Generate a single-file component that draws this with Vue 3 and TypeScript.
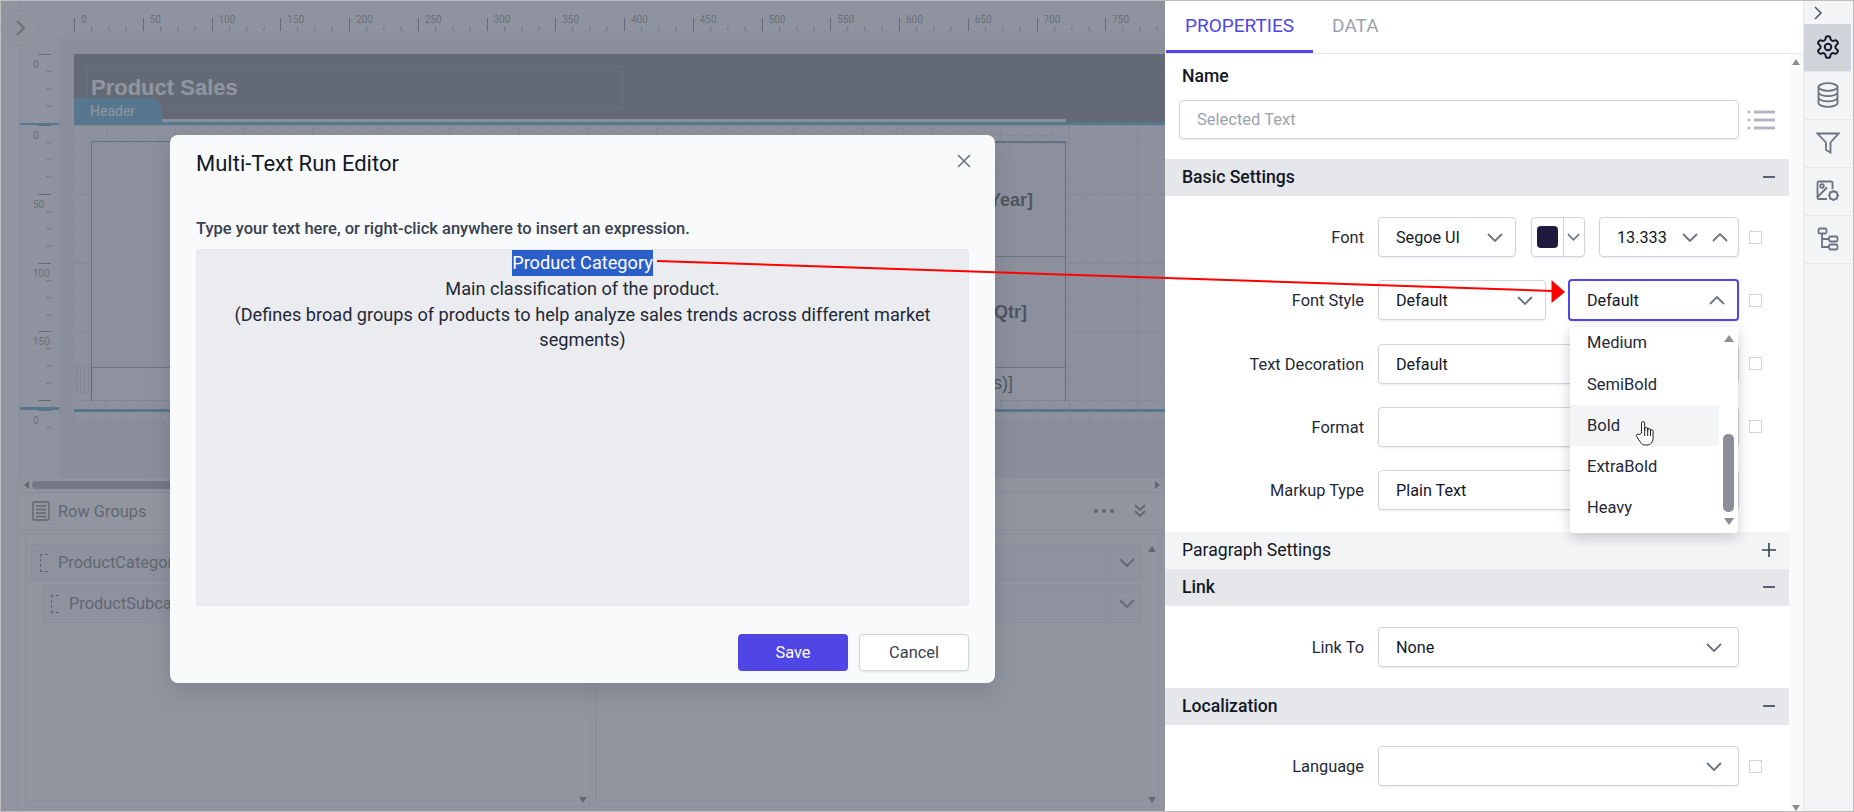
<template>
  <div class="app">
    <!-- report designer, dimmed by the dialog overlay -->
    <div class="designer">
      <div class="rail">
        <button class="collapse-btn">
          <svg width="11" height="18" viewBox="0 0 11 18"><path d="M2 2l7 7-7 7" /></svg>
        </button>
      </div>
      <div class="designer-main">
        <div class="design-area">
          <div class="top-ruler-row">
            <div class="h-ruler">
              <div v-for="n in hRuler" :key="n" class="h-cell">{{ n }}</div>
            </div>
          </div>
          <div class="design-row">
            <div class="v-ruler-col">
              <div class="v-ruler v-ruler-head">
                <div class="v-cell">0</div>
              </div>
              <div class="v-sep"></div>
              <div class="v-ruler v-ruler-body">
                <div v-for="n in vRuler" :key="n" class="v-cell">{{ n }}</div>
                <div class="v-cell"></div>
              </div>
              <div class="v-sep v-sep-thick"></div>
              <div class="v-ruler v-ruler-foot">
                <div class="v-cell">0</div>
              </div>
            </div>
            <div class="surface">
              <div class="report-header">
                <div class="title-box">Product Sales</div>
                <div class="header-tab">Header</div>
              </div>
              <div class="report-body">
                <div class="faint-box"></div>
                <div class="tablix">
                  <div class="tablix-row row-year"><b>[Year]</b></div>
                  <div class="tablix-row row-qtr"><b>[Qtr]</b></div>
                  <div class="tablix-row row-sum">[Sum(Sales)]</div>
                </div>
                <div class="row-handle"><i></i><i></i></div>
              </div>
              <div class="body-line"></div>
              <div class="report-footer"></div>
            </div>
          </div>
        </div>
        <div class="h-scroll">
          <span class="arrow-left"></span>
          <div class="h-thumb"></div>
          <span class="arrow-right"></span>
        </div>
        <div class="groups">
          <div class="groups-head">
            <svg width="18" height="20" viewBox="0 0 18 20" class="groups-icon">
              <rect x="1" y="1" width="16" height="18" rx="1" />
              <path d="M4 5h10M4 8.500h10M4 12h10M4 15.500h10" />
            </svg>
            <span>Row Groups</span>
            <div class="groups-tools">
              <span class="dots"><i></i><i></i><i></i></span>
              <svg width="12" height="14" viewBox="0 0 12 14"><path d="M1 1l5 5 5-5M1 7l5 5 5-5" /></svg>
            </div>
          </div>
          <div class="groups-body">
            <div class="pane">
              <div class="group-item">
                <span class="bracket"></span>ProductCategory
              </div>
              <div class="group-item nested">
                <span class="bracket"></span>ProductSubcategory
              </div>
              <span class="pane-arrow-down"></span>
            </div>
            <div class="pane pane-right">
              <div class="detail-item"><div class="detail-chevron"><svg width="16" height="9" viewBox="0 0 16 9"><path d="M1 1l7 7 7-7" /></svg></div></div>
              <div class="detail-item nested-detail"><div class="detail-chevron"><svg width="16" height="9" viewBox="0 0 16 9"><path d="M1 1l7 7 7-7" /></svg></div></div>
              <span class="pane-arrow-up"></span>
              <span class="pane-arrow-down pane-arrow-far"></span>
            </div>
          </div>
        </div>
      </div>
    </div>

    <!-- properties panel -->
    <aside class="props">
      <div class="tabs">
        <div class="tab active">PROPERTIES</div>
        <div class="tab">DATA</div>
      </div>
      <div class="props-scroll">
        <div class="props-content">
          <div class="name-label">Name</div>
          <div class="name-row">
            <div class="name-input">Selected Text</div>
            <svg width="28" height="22" viewBox="0 0 28 22" class="list-icon">
              <circle cx="2" cy="3" r="1.500" />
              <circle cx="2" cy="11" r="1.500" />
              <circle cx="2" cy="19" r="1.500" />
              <rect x="7" y="1.500" width="21" height="3" />
              <rect x="7" y="9.500" width="21" height="3" />
              <rect x="7" y="17.500" width="21" height="3" />
            </svg>
          </div>

          <div class="bar">Basic Settings<svg width="14" height="14" viewBox="0 0 14 14"><path d="M1 7h12" /></svg></div>
          <div class="rows rows-basic">
            <div class="row">
              <label>Font</label>
              <div class="control font-controls">
                <div class="sel sel-font">Segoe UI<svg class="chev" width="16" height="9" viewBox="0 0 16 9"><path d="M1 1l7 7 7-7" /></svg></div>
                <div class="color-pick">
                  <span class="swatch-wrap"><span class="swatch"></span></span>
                  <span class="color-drop"><svg class="chev" width="13" height="8" viewBox="0 0 14 8"><path d="M1 1l6 6 6-6" /></svg></span>
                </div>
                <div class="sel sel-size">
                  13.333
                  <span class="spin">
                    <svg class="chev" width="16" height="9" viewBox="0 0 16 9"><path d="M1 1l7 7 7-7" /></svg>
                    <svg class="chev" width="16" height="9" viewBox="0 0 16 9"><path d="M1 8l7-7 7 7" /></svg>
                  </span>
                </div>
              </div>
              <span class="check"></span>
            </div>
            <div class="row">
              <label>Font Style</label>
              <div class="control style-controls">
                <div class="sel sel-style">Default<svg class="chev" width="16" height="9" viewBox="0 0 16 9"><path d="M1 1l7 7 7-7" /></svg></div>
                <div class="weight-wrap">
                  <div class="sel sel-focus">Default<svg class="chev" width="16" height="9" viewBox="0 0 16 9"><path d="M1 8l7-7 7 7" /></svg></div>
                  <div class="dropdown">
                    <ul class="drop-list">
                      <li v-for="w in weights" :key="w" :class="{ hover: w === 'Bold' }">{{ w }}</li>
                    </ul>
                    <div class="drop-scroll">
                      <span class="tri-up"></span>
                      <span class="drop-thumb"></span>
                      <span class="tri-down"></span>
                    </div>
                    <svg class="hand" width="20" height="26" viewBox="0 0 20 26">
                      <path d="M6.500 13V3.200a1.600 1.600 0 0 1 3.200 0V11l0-2a1.500 1.500 0 0 1 3 0v2.500l0-1.500a1.400 1.400 0 0 1 2.800 0v2l0-.8a1.300 1.300 0 0 1 2.600 0V18c0 4-2.500 7-6.300 7H10.500c-2.500 0-3.800-1-5-2.700L1.700 16.500a1.500 1.500 0 0 1 2.400-1.800z" />
                      <path d="M9.700 11v5M12.700 11v5M15.500 12v4" />
                    </svg>
                  </div>
                </div>
              </div>
              <span class="check"></span>
            </div>
            <div class="row">
              <label>Text Decoration</label>
              <div class="control"><div class="sel">Default</div></div>
              <span class="check"></span>
            </div>
            <div class="row">
              <label>Format</label>
              <div class="control"><div class="sel"></div></div>
              <span class="check"></span>
            </div>
            <div class="row">
              <label>Markup Type</label>
              <div class="control"><div class="sel">Plain Text</div></div>
            </div>
          </div>

          <div class="bar bar-closed">Paragraph Settings<svg width="14" height="14" viewBox="0 0 14 14"><path d="M0 7h14M7 0v14" /></svg></div>
          <div class="bar">Link<svg width="14" height="14" viewBox="0 0 14 14"><path d="M1 7h12" /></svg></div>
          <div class="rows rows-single">
            <div class="row">
              <label>Link To</label>
              <div class="control"><div class="sel">None<svg class="chev" width="16" height="9" viewBox="0 0 16 9"><path d="M1 1l7 7 7-7" /></svg></div></div>
            </div>
          </div>
          <div class="bar">Localization<svg width="14" height="14" viewBox="0 0 14 14"><path d="M1 7h12" /></svg></div>
          <div class="rows rows-single">
            <div class="row">
              <label>Language</label>
              <div class="control"><div class="sel sel-empty"><svg class="chev" width="16" height="9" viewBox="0 0 16 9"><path d="M1 1l7 7 7-7" /></svg></div></div>
              <span class="check"></span>
            </div>
          </div>
        </div>
        <div class="props-strip">
          <span class="tri-up"></span>
          <span class="tri-down"></span>
        </div>
      </div>
    </aside>

    <!-- right icon toolbar -->
    <nav class="toolbar">
      <div class="toolbar-top">
        <svg width="10" height="14" viewBox="0 0 10 14"><path d="M2 1l6 6-6 6" /></svg>
      </div>
      <div class="tool active">
        <svg width="26" height="26" viewBox="0 0 24 24" class="tool-dark">
          <path d="M12.220 2h-.44a2 2 0 0 0-2 2v.18a2 2 0 0 1-1 1.730l-.43.25a2 2 0 0 1-2 0l-.15-.08a2 2 0 0 0-2.730.73l-.22.38a2 2 0 0 0 .73 2.730l.15.1a2 2 0 0 1 1 1.720v.51a2 2 0 0 1-1 1.740l-.15.09a2 2 0 0 0-.73 2.730l.22.38a2 2 0 0 0 2.730.73l.15-.08a2 2 0 0 1 2 0l.43.25a2 2 0 0 1 1 1.730V20a2 2 0 0 0 2 2h.44a2 2 0 0 0 2-2v-.18a2 2 0 0 1 1-1.730l.43-.25a2 2 0 0 1 2 0l.15.08a2 2 0 0 0 2.730-.73l.22-.39a2 2 0 0 0-.73-2.730l-.15-.08a2 2 0 0 1-1-1.740v-.5a2 2 0 0 1 1-1.740l.15-.09a2 2 0 0 0 .73-2.730l-.22-.38a2 2 0 0 0-2.730-.73l-.15.08a2 2 0 0 1-2 0l-.43-.25a2 2 0 0 1-1-1.730V4a2 2 0 0 0-2-2z" />
          <circle cx="12" cy="12" r="3" />
        </svg>
      </div>
      <div class="tool">
        <svg width="22" height="26" viewBox="0 0 22 26">
          <ellipse cx="11" cy="5" rx="9.500" ry="3.800" />
          <path d="M1.500 5v16c0 2.100 4.300 3.800 9.500 3.800s9.500-1.700 9.500-3.800V5M1.500 10.300c0 2.100 4.300 3.800 9.500 3.800s9.500-1.700 9.500-3.800M1.500 15.600c0 2.100 4.300 3.800 9.500 3.800s9.500-1.700 9.500-3.800" />
        </svg>
      </div>
      <div class="tool">
        <svg width="24" height="22" viewBox="0 0 24 22">
          <path d="M1.500 1.500h21l-8 9v10l-4.500-2.500v-7.500z" />
        </svg>
      </div>
      <div class="tool">
        <svg width="24" height="22" viewBox="0 0 24 22">
          <path d="M11 19H2.800a1.300 1.300 0 0 1-1.300-1.300V2.800a1.300 1.300 0 0 1 1.300-1.300h12.400a1.300 1.300 0 0 1 1.300 1.300V9" />
          <circle cx="6" cy="6" r="1.800" />
          <path d="M1.500 17l9.500-9.500" />
          <circle cx="17.500" cy="15.500" r="4" class="tool-fill" />
          <path d="M17.500 10v2M17.500 19v2M12 15.500h2M21 15.500h2M13.600 11.600l1.400 1.400M20 18l1.400 1.400M13.600 19.400l1.400-1.400M20 13l1.400-1.400" />
        </svg>
      </div>
      <div class="tool">
        <svg width="22" height="24" viewBox="0 0 22 24">
          <rect x="1.500" y="1.500" width="8" height="5" rx="1.500" />
          <rect x="12" y="9.500" width="8.500" height="5" rx="1.500" />
          <rect x="12" y="17.500" width="8.500" height="5" rx="1.500" />
          <path d="M5 6.500V20h7M5 12h7" />
        </svg>
      </div>
    </nav>

    <div class="overlay"></div>

    <!-- dialog -->
    <div class="dialog">
      <div class="dialog-head">
        <h2>Multi-Text Run Editor</h2>
        <svg width="14" height="14" viewBox="0 0 14 14" class="dialog-close"><path d="M1 1l12 12M13 1L1 13" /></svg>
      </div>
      <div class="dialog-label">Type your text here, or right-click anywhere to insert an expression.</div>
      <div class="editor">
        <div><span class="selected">Product Category</span></div>
        <div>Main classification of the product.</div>
        <div>(Defines broad groups of products to help analyze sales trends across different market segments)</div>
      </div>
      <div class="dialog-foot">
        <button class="btn btn-save">Save</button>
        <button class="btn btn-cancel">Cancel</button>
      </div>
    </div>

    <svg class="callout" width="920" height="60" viewBox="650 250 920 60">
      <path d="M657 261L1553 291" />
      <polygon points="1565,292 1551.500,280 1551.500,303" />
    </svg>
  </div>
</template>

<script setup lang="ts">
const hRuler: number[] = Array.from({ length: 16 }, (_, i) => i * 50);
const vRuler: number[] = [0, 50, 100, 150];
const weights: string[] = ['Medium', 'SemiBold', 'Bold', 'ExtraBold', 'Heavy'];
</script>

<style>
html,
body {
  margin: 0;
  padding: 0;
  background: #fff;
}
</style>

<style scoped>
* {
  box-sizing: border-box;
}

.app {
  position: relative;
  display: flex;
  width: 1854px;
  height: 812px;
  overflow: hidden;
  border: 1px solid #bdbdbd;
  font-family: Roboto, 'Liberation Sans', sans-serif;
  color: #111827;
  background: #fff;
}

/* designer */
.designer {
  display: flex;
  flex: 0 0 1164px;
  min-width: 0;
  height: 100%;
  overflow: hidden;
  background: #fff;
}

.rail {
  position: relative;
  flex: 0 0 18px;
  border-right: 1px solid #e5e7eb;
}

.collapse-btn {
  position: absolute;
  left: 1px;
  top: 9px;
  display: flex;
  align-items: center;
  justify-content: center;
  width: 36px;
  height: 36px;
  border: 1px solid #eceef1;
  border-radius: 50%;
  background: #f9fafb;
  padding: 0;
  z-index: 1;
}

.collapse-btn path {
  fill: none;
  stroke: #666;
  stroke-width: 2;
}

.designer-main {
  display: flex;
  flex-direction: column;
  flex: 1;
  min-width: 0;
}

.design-area {
  flex: 0 0 477px;
  display: flex;
  flex-direction: column;
  overflow: hidden;
  background: #f3f4f6;
}

.top-ruler-row {
  flex: 0 0 38px;
  padding: 8px 0 0 55px;
}

.h-ruler {
  display: flex;
  height: 22px;
  overflow: hidden;
  background: #f8f8f9;
}

.h-cell {
  flex: 0 0 68.75px;
  padding: 4px 0 0 7px;
  font-size: 10px;
  line-height: 13px;
  color: #666;
  background:
    linear-gradient(#555, #555) left bottom / 1px 13px no-repeat,
    linear-gradient(90deg, #777 1px, transparent 1px) 17.190px bottom / 17.190px 4px repeat-x;
}

.design-row {
  display: flex;
  flex: 1;
  min-height: 0;
}

.v-ruler-col {
  display: flex;
  flex-direction: column;
  flex: 0 0 40px;
  padding-top: 15px;
}

.v-ruler {
  flex: none;
  margin-left: 10px;
  width: 22px;
  background: #f8f8f9;
  overflow: hidden;
}

.v-ruler-head {
  height: 69px;
}

.v-ruler-body {
  height: 282px;
}

.v-ruler-foot {
  height: 18px;
}

.v-cell {
  height: 68.75px;
  padding: 4px 0 0 4px;
  font-size: 10px;
  line-height: 13px;
  color: #666;
  background:
    linear-gradient(#555, #555) right top / 13px 1px no-repeat,
    linear-gradient(#777 1px, transparent 1px) right 17.190px / 5px 17.190px repeat-y;
}

.v-sep {
  height: 2px;
  flex: none;
  margin-left: 1px;
  background: #1c86b8;
}

.v-sep-thick {
  height: 3px;
}

.surface {
  flex: 1;
  min-width: 0;
  padding: 15px 0 0 15px;
  background: #e4e4e8;
}

.report-header {
  position: relative;
  height: 71px;
  padding: 13px 0 0 13px;
  background: #4f5258;
  border-bottom: 3px solid #1c86b8;
}

.title-box {
  width: 536px;
  height: 41px;
  padding: 7px 0 0 3px;
  border: 1px dotted #7d8188;
  font-family: 'Liberation Sans', Arial, sans-serif;
  font-size: 22px;
  line-height: 26px;
  font-weight: 700;
  color: #fff;
}

.report-header::after {
  content: '';
  position: absolute;
  left: 88px;
  right: 99px;
  bottom: 0;
  height: 3px;
  background: #e4e4e8;
}

.header-tab {
  position: absolute;
  left: 0;
  bottom: -3px;
  width: 88px;
  height: 27px;
  padding: 4px 0 0 16px;
  border-radius: 0 14px 0 0;
  font-size: 14px;
  line-height: 18px;
  color: #fff;
  background: #1c86b8;
  z-index: 1;
}

.report-body {
  position: relative;
  height: 284px;
  padding: 16px 0 0 17px;
  background:
    linear-gradient(#cfd1d6 1px, transparent 1px) 0 0 / 100% 68.750px,
    linear-gradient(90deg, #cfd1d6 1px, transparent 1px) 32px 0 / 68.750px 100%,
    linear-gradient(#dcdde1 1px, transparent 1px) 0 0 / 100% 17.190px,
    linear-gradient(90deg, #dcdde1 1px, transparent 1px) 15px 0 / 17.190px 100%,
    #eef0f2;
}

.faint-box {
  position: absolute;
  left: 829px;
  top: 1px;
  width: 160px;
  height: 10px;
  border: 1px solid #d5d6da;
}

.tablix {
  width: 975px;
  background: #e9e9ed;
  font-family: 'Liberation Sans', Arial, sans-serif;
  font-size: 18px;
  color: #000;
  border-left: 1px solid #1c86b8;
  border-right: 1px solid #555;
  border-top: 1px solid #1c86b8;
}

.tablix-row {
  display: flex;
  align-items: center;
  justify-content: flex-end;
}

.row-year {
  height: 115px;
  padding-right: 32px;
  padding-top: 1px;
  background:
    linear-gradient(#555, #555) right top / 260px 1px no-repeat,
    linear-gradient(#777, #777) right bottom / 300px 1px no-repeat;
}

.row-qtr {
  height: 111px;
  padding-right: 38px;
  padding-top: 1px;
  border-bottom: 1px solid #777;
  background: none;
}

.row-sum {
  height: 33px;
  padding-right: 52px;
  padding-bottom: 2px;
  border-bottom: 1px dotted #999;
  border-left: 1px solid #444;
  margin-left: -1px;
  background: #f3f3f5;
}

.row-handle {
  position: absolute;
  left: 2px;
  top: 242px;
  display: flex;
  gap: 3px;
  width: 15px;
}

.row-handle i {
  width: 5px;
  height: 26px;
  border: 1px solid #c8cace;
}

.body-line {
  height: 3px;
  background: #1c86b8;
}

.report-footer {
  height: 10px;
  background:
    linear-gradient(90deg, #cfd1d6 1px, transparent 1px) 0 0 / 17.190px 100%,
    #eef0f2;
  border-bottom: 1px solid #cfd1d6;
}

.h-scroll {
  display: flex;
  align-items: center;
  flex: 0 0 15px;
  padding: 0 5px 0 5px;
  background: #f9fafb;
  border-bottom: 1px solid #dfe0e4;
}

.arrow-left {
  border: 4px solid transparent;
  border-right: 5px solid #444;
  border-left: 0;
}

.arrow-right {
  margin-left: auto;
  border: 4px solid transparent;
  border-left: 5px solid #444;
  border-right: 0;
}

.h-thumb {
  width: 540px;
  height: 8px;
  margin-left: 3px;
  border-radius: 4px;
  background: #8a8d96;
}

.groups {
  flex: 1;
  display: flex;
  flex-direction: column;
  min-height: 0;
}

.groups-head {
  display: flex;
  align-items: center;
  flex: 0 0 37px;
  padding: 0 19px 0 13px;
  font-size: 16.400px;
  color: #444;
  border-bottom: 1px solid #e5e7eb;
}

.groups-icon {
  margin-right: 8px;
}

.groups-icon rect,
.groups-icon path {
  fill: none;
  stroke: #444;
  stroke-width: 1.400;
}

.groups-tools {
  display: flex;
  align-items: center;
  gap: 20px;
  margin-left: auto;
}

.groups-tools path {
  fill: none;
  stroke: #444;
  stroke-width: 1.800;
}

.dots {
  display: flex;
  gap: 4px;
}

.dots i {
  width: 4px;
  height: 4px;
  border-radius: 50%;
  background: #444;
}

.groups-body {
  display: flex;
  flex: 1;
  min-width: 0;
  gap: 6px;
  padding: 3px 6px 4px 7px;
  min-height: 0;
}

.pane {
  position: relative;
  flex: 1 1 0;
  min-width: 0;
  padding: 10px 6px 0 4px;
  border: 1px solid #e5e7eb;
}

.group-item {
  display: flex;
  align-items: center;
  height: 37px;
  padding-left: 8px;
  border: 1px solid #dfe1e6;
  border-radius: 3px;
  background: #f3f4f6;
  font-size: 16.400px;
  color: #444;
  overflow: hidden;
  white-space: nowrap;
}

.group-item.nested {
  height: 39px;
  margin: 3px 0 0 11px;
}

.bracket {
  flex: none;
  width: 8px;
  height: 18px;
  margin-right: 10px;
  border: 1px dashed #444;
  border-right: 0;
}

.detail-item {
  display: flex;
  justify-content: flex-end;
  height: 37px;
  margin-right: 10px;
  border: 1px solid #dfe1e6;
  border-radius: 3px;
  background: #f3f4f6;
}

.nested-detail {
  height: 39px;
  margin-top: 3px;
}

.detail-chevron {
  display: flex;
  align-items: center;
  justify-content: center;
  width: 30px;
  border-left: 1px solid #dfe1e6;
}

.detail-chevron path {
  fill: none;
  stroke: #555;
  stroke-width: 2;
}

.pane-arrow-down {
  position: absolute;
  right: 2px;
  bottom: 3px;
  border: 4px solid transparent;
  border-top: 6px solid #444;
  border-bottom: 0;
}

.pane-arrow-up {
  position: absolute;
  right: 2px;
  top: 12px;
  border: 4px solid transparent;
  border-bottom: 6px solid #444;
  border-top: 0;
}

/* properties panel */
.props {
  display: flex;
  flex-direction: column;
  flex: 0 0 638px;
  height: 100%;
}

.tabs {
  display: flex;
  flex: 0 0 53px;
  padding-left: 1px;
  border-bottom: 1px solid #e5e7eb;
}

.tab {
  height: 52px;
  padding: 14px 19px 0;
  font-size: 19px;
  line-height: 21px;
  color: #9ca3af;
}

.tab.active {
  color: #4f46e5;
  border-bottom: 3px solid #4f46e5;
}

.props-scroll {
  display: flex;
  flex: 1;
  min-height: 0;
}

.props-content {
  flex: 0 0 624px;
  overflow: hidden;
}

.name-label {
  height: 20px;
  margin: 12px 0 14px 17px;
  font-size: 17.600px;
  line-height: 20px;
  font-weight: 500;
}

.name-row {
  display: flex;
  align-items: center;
  gap: 8px;
  margin: 0 0 20px 14px;
}

.name-input {
  width: 560px;
  height: 39px;
  padding-left: 17px;
  border: 1px solid #d1d5db;
  border-radius: 4px;
  box-shadow: 0 1px 2px rgba(0, 0, 0, 0.08);
  font-size: 16.500px;
  line-height: 38px;
  color: #9ca3af;
}

.list-icon {
  fill: #b4b7c2;
}

.bar {
  display: flex;
  align-items: center;
  justify-content: space-between;
  height: 37px;
  padding: 0 13px 1px 17px;
  font-size: 17.600px;
  font-weight: 500;
  background: #e5e7eb;
}

.bar svg {
  fill: none;
  stroke: #374151;
  stroke-width: 1.600;
}

.bar-closed {
  font-weight: 400;
  background: #f3f4f6;
}

.rows {
  display: flex;
  flex-direction: column;
  gap: 23.300px;
}

.rows-basic {
  padding: 21px 0 22px;
}

.rows-single {
  padding: 21px 0;
}

.row {
  display: grid;
  grid-template-columns: 199px 361px 13px;
  column-gap: 14px;
  align-items: center;
  height: 40px;
}

.row label {
  padding-top: 1px;
  text-align: right;
  font-size: 16.400px;
  color: #1f2937;
}

.control {
  display: flex;
  height: 40px;
}

.check {
  width: 13px;
  height: 13px;
  margin-left: -4px;
  border: 1px solid #d1d5db;
  background: #fff;
}

.sel {
  display: flex;
  align-items: center;
  justify-content: space-between;
  width: 100%;
  height: 40px;
  padding: 1px 16px 0 17px;
  border: 1px solid #d1d5db;
  border-radius: 4px;
  box-shadow: 0 1px 2px rgba(0, 0, 0, 0.08);
  font-size: 16.200px;
  background: #fff;
}

.sel-empty {
  justify-content: flex-end;
}

.chev {
  flex: none;
  fill: none;
  stroke: #6b7280;
  stroke-width: 1.800;
}

.font-controls {
  gap: 14.500px;
}

.sel-font {
  flex: 0 0 138px;
  padding-right: 12px;
}

.color-pick {
  display: flex;
  flex: 0 0 54px;
  border: 1px solid #d1d5db;
  border-radius: 4px;
  box-shadow: 0 1px 2px rgba(0, 0, 0, 0.08);
}

.swatch-wrap {
  display: flex;
  align-items: center;
  justify-content: center;
  flex: 0 0 32px;
  border-right: 1px solid #d1d5db;
}

.swatch {
  width: 21px;
  height: 22px;
  border-radius: 4px;
  background: #1e1b3f;
}

.color-drop {
  display: flex;
  align-items: center;
  justify-content: center;
  flex: 1;
}

.sel-size {
  flex: 1;
  width: auto;
  padding-right: 10px;
}

.spin {
  display: flex;
  gap: 14px;
}

.style-controls {
  gap: 22px;
}

.sel-style {
  flex: 0 0 168px;
  padding-right: 12px;
}

.weight-wrap {
  position: relative;
  flex: 1;
  margin-top: -1px;
}

.sel-focus {
  height: 42px;
  padding: 0 12px 0 17px;
  border: 2px solid #4f46e5;
}

.dropdown {
  position: absolute;
  left: 2px;
  top: 48px;
  display: flex;
  width: 168px;
  height: 206px;
  overflow: hidden;
  background: #fff;
  border-radius: 3px;
  box-shadow: 0 4px 14px rgba(0, 0, 0, 0.2);
  z-index: 3;
}

.drop-list {
  flex: 0 0 149px;
  margin: -5px 0 0;
  padding: 0;
  list-style: none;
}

.drop-list li {
  height: 41.300px;
  padding-left: 17px;
  font-size: 16.500px;
  line-height: 41px;
  color: #1f2937;
}

.drop-list li.hover {
  background: #f3f4f6;
}

.drop-scroll {
  display: flex;
  flex-direction: column;
  align-items: center;
  flex: 1;
  padding: 8px 0;
}

.tri-up {
  flex: none;
  border: 5px solid transparent;
  border-bottom: 7px solid #8b8e97;
  border-top: 0;
}

.tri-down {
  flex: none;
  border: 5px solid transparent;
  border-top: 7px solid #8b8e97;
  border-bottom: 0;
}

.drop-thumb {
  width: 11px;
  height: 78px;
  margin-top: auto;
  margin-bottom: 6px;
  border-radius: 5px;
  background: #8b8e97;
}

.hand {
  position: absolute;
  left: 65px;
  top: 93px;
}

.hand path {
  fill: #fff;
  stroke: #222;
  stroke-width: 1;
}

.props-strip {
  display: flex;
  flex-direction: column;
  align-items: center;
  justify-content: space-between;
  flex: 1;
  padding: 5px 0 0;
  background: #fafafa;
}

.props-strip .tri-up,
.props-strip .tri-down {
  border-width: 4px;
  border-bottom-width: 6px;
  border-top-width: 0;
}

.props-strip .tri-down {
  border-top-width: 6px;
  border-bottom-width: 0;
}

/* toolbar */
.toolbar {
  flex: 1;
  padding-right: 2px;
  border-left: 1px solid #e5e7eb;
  background: #f3f4f6;
}

.toolbar-top {
  display: flex;
  align-items: center;
  height: 23px;
  padding-left: 9px;
}

.toolbar-top path {
  fill: none;
  stroke: #4b5563;
  stroke-width: 1.500;
}

.tool {
  display: flex;
  align-items: center;
  justify-content: center;
  height: 48px;
  padding-bottom: 2px;
  border-bottom: 1px solid #e5e7eb;
}

.tool.active {
  background: #d1d5db;
}

.tool svg {
  fill: none;
  stroke: #6b7280;
  stroke-width: 1.800;
}

.tool svg.tool-dark {
  stroke: #111827;
}

.tool-fill {
  fill: #f3f4f6;
}

/* modal */
.overlay {
  position: absolute;
  left: 0;
  top: 0;
  bottom: 0;
  width: 1164px;
  background: rgba(107, 114, 128, 0.75);
  z-index: 5;
}

.dialog {
  position: absolute;
  left: 169px;
  top: 134px;
  display: flex;
  flex-direction: column;
  width: 825px;
  height: 548px;
  padding: 0 26px;
  border-radius: 8px;
  background: #f9fafb;
  box-shadow: 0 10px 24px rgba(0, 0, 0, 0.12);
  z-index: 6;
}

.dialog-head {
  display: flex;
  align-items: center;
  justify-content: space-between;
  flex: 0 0 56px;
}

.dialog-head h2 {
  margin: 0;
  font-size: 22px;
  font-weight: 400;
  color: #111827;
}

.dialog-close {
  margin: -4px -2px 0 0;
}

.dialog-close path {
  fill: none;
  stroke: #6b7280;
  stroke-width: 1.600;
}

.dialog-label {
  height: 20px;
  margin: 28px 0 10px;
  font-size: 16.500px;
  line-height: 20px;
  font-weight: 500;
  color: #374151;
}

.editor {
  flex: 0 0 357px;
  padding: 0 8px;
  border: 1px solid #e5e7eb;
  border-radius: 3px;
  background: #ebecef;
  font-size: 18.150px;
  line-height: 25.800px;
  text-align: center;
  color: #1f2937;
}

.selected {
  display: inline-block;
  color: #fff;
  background: #2a5ec9;
}

.dialog-foot {
  display: flex;
  justify-content: flex-end;
  gap: 11px;
  margin-top: 28px;
}

.btn {
  width: 110px;
  height: 37px;
  padding: 0;
  border-radius: 4px;
  font-family: inherit;
  font-size: 16.400px;
}

.btn-save {
  border: 0;
  color: #fff;
  background: #4f46e5;
}

.btn-cancel {
  border: 1px solid #d1d5db;
  color: #374151;
  background: #fff;
  box-shadow: 0 1px 2px rgba(0, 0, 0, 0.08);
}

.callout {
  position: absolute;
  left: 649px;
  top: 249px;
  z-index: 7;
}

.callout path {
  fill: none;
  stroke: #ff0000;
  stroke-width: 2;
}

.callout polygon {
  fill: #ff0000;
}
</style>
